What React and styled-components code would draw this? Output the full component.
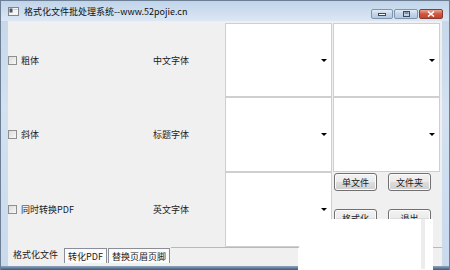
import React from 'react'
import styled, { createGlobalStyle } from 'styled-components'

const GlobalStyle = createGlobalStyle`
  html, body {
    margin: 0;
    padding: 0;
    background: #ffffff;
  }
  body {
    font-family: "Noto Sans CJK SC", "Noto Sans", sans-serif;
    font-size: 9px;
    color: #1a1a1a;
  }
`

const Window = styled.div`
  position: relative;
  box-sizing: border-box;
  width: 450px;
  height: 270px;
  display: flex;
  flex-direction: column;
  border: 1px solid #6d7f94;
  border-bottom: none;
  background: linear-gradient(#c4d6ea, #d3e1f1 40%, #c9daed);
  overflow: hidden;
`

const TitleBar = styled.div`
  height: 20px;
  display: flex;
  align-items: center;
  padding-left: 7px;
  background: linear-gradient(#c0d4ea, #dbe7f4);
`

const Title = styled.span`
  margin-left: 5px;
  font-size: 9px;
  color: #101010;
  white-space: nowrap;
`

const Caption = styled.div`
  margin-left: auto;
  margin-right: 6px;
  margin-top: 6px;
  display: flex;
  gap: 1px;
`

const CapButton = styled.div`
  box-sizing: border-box;
  width: ${({ w }) => w}px;
  height: 10px;
  display: flex;
  align-items: center;
  justify-content: center;
  border: 1px solid ${({ close }) => (close ? '#8a3b30' : '#7e95af')};
  border-radius: 2px;
  background: ${({ close }) =>
    close
      ? 'linear-gradient(#e9a795, #d0553d 50%, #c2442d)'
      : 'linear-gradient(#e3ecf6, #c3d4e8 50%, #b4c8df)'};
`

const Client = styled.div`
  flex: 1;
  margin: 0 7px 0 7px;
  background: #f0f0f0;
  display: flex;
  flex-direction: column;
  padding-top: 2px;
`

const Grid = styled.div`
  display: grid;
  grid-template-columns: 145px 72px 108px 108px;
  grid-template-rows: 74px 75px 75px;
`

const CheckCell = styled.label`
  display: flex;
  align-items: center;
  gap: 4px;
  white-space: nowrap;
`

const Box = styled.span`
  box-sizing: border-box;
  width: 9px;
  height: 9px;
  border: 1px solid #8e8f8f;
  background: linear-gradient(135deg, #dcdcdc, #f7f7f7);
`

const Label = styled.div`
  display: flex;
  align-items: center;
  white-space: nowrap;
`

const Combo = styled.div`
  box-sizing: border-box;
  margin-right: 1px;
  background: #ffffff;
  border: 1px solid #cfcfcf;
  display: flex;
  align-items: center;
  justify-content: flex-end;
  padding-right: 4px;
`

const Arrow = styled.span`
  width: 0;
  height: 0;
  border-left: 3px solid transparent;
  border-right: 3px solid transparent;
  border-top: 3px solid #000;
`

const Buttons = styled.div`
  display: grid;
  grid-template-columns: 43px 43px;
  grid-auto-rows: 18px;
  column-gap: 11px;
  row-gap: 18px;
  padding: 1px 0 0 1px;
  align-content: start;
`

const Button = styled.div`
  box-sizing: border-box;
  display: flex;
  align-items: center;
  justify-content: center;
  border: 1px solid #707070;
  border-radius: 3px;
  background: linear-gradient(#f2f2f2, #ebebeb 50%, #dddddd 51%, #cfcfcf);
  box-shadow: inset 0 0 0 1px #fcfcfc;
  white-space: nowrap;
`

const TabBar = styled.div`
  display: flex;
  align-items: flex-end;
  height: 19px;
`

const Tab = styled.div`
  box-sizing: border-box;
  height: ${({ active }) => (active ? 18 : 15)}px;
  padding: 0 ${({ active }) => (active ? 4 : 3)}px;
  display: flex;
  align-items: center;
  white-space: nowrap;
  background: ${({ active }) => (active ? '#f0f0f0' : '#fbfbfb')};
  border: 1px solid ${({ active }) => (active ? '#f0f0f0' : '#8b8e96')};
  border-bottom: none;
  margin-right: 1px;
  margin-bottom: 3px;
`

const TabRest = styled.div`
  flex: 1;
  height: 15px;
  margin-bottom: 3px;
  border-top: 1px solid #b9b9b9;
`

const BottomFrame = styled.div`
  height: 4px;
  background: linear-gradient(#8ea6c1, #3f5874);
`

const Watermark = styled.svg`
  position: absolute;
  left: 0;
  top: 0;
  pointer-events: none;
`

const AppIcon = () => (
  <svg width="11" height="9" viewBox="0 0 11 9">
    <rect x="0.5" y="0.5" width="10" height="8" fill="#f4f4f4" stroke="#7d8590" />
    <rect x="1.5" y="1.5" width="3" height="4" fill="#4b5563" />
    <rect x="5.5" y="2" width="4" height="1" fill="#c9ced6" />
  </svg>
)

const rows = [
  { check: '粗体', label: '中文字体' },
  { check: '斜体', label: '标题字体' },
  { check: '同时转换PDF', label: '英文字体' },
]

export default function App() {
  return (
    <>
      <GlobalStyle />
      <Window>
        <TitleBar>
          <AppIcon />
          <Title>格式化文件批处理系统--www.52pojie.cn</Title>
          <Caption>
            <CapButton w={22}>
              <svg width="8" height="3"><rect x="0.5" y="0.5" width="7" height="2" fill="#fff" stroke="#3b4a5c" /></svg>
            </CapButton>
            <CapButton w={24}>
              <svg width="7" height="6"><rect x="0.5" y="0.5" width="6" height="5" fill="none" stroke="#3b4a5c" /><rect x="1.5" y="1.5" width="4" height="1" fill="#3b4a5c" /></svg>
            </CapButton>
            <CapButton w={24} close>
              <svg width="8" height="6"><path d="M1 0.5 L7 5.5 M7 0.5 L1 5.5" stroke="#fff" strokeWidth="1.6" /></svg>
            </CapButton>
          </Caption>
        </TitleBar>
        <Client>
          <Grid>
            {rows.map((r, i) => (
              <React.Fragment key={r.label}>
                <CheckCell>
                  <Box />
                  {r.check}
                </CheckCell>
                <Label>{r.label}</Label>
                <Combo>
                  <Arrow />
                </Combo>
                {i < 2 ? (
                  <Combo>
                    <Arrow />
                  </Combo>
                ) : (
                  <Buttons>
                    <Button>单文件</Button>
                    <Button>文件夹</Button>
                    <Button>格式化</Button>
                    <Button>退出</Button>
                  </Buttons>
                )}
              </React.Fragment>
            ))}
          </Grid>
          <TabBar>
            <Tab active>格式化文件</Tab>
            <Tab>转化PDF</Tab>
            <Tab>替换页眉页脚</Tab>
            <TabRest />
          </TabBar>
        </Client>
        <BottomFrame />
        <Watermark width="450" height="270" viewBox="0 0 450 270">
          <path d="M297 270 L297 248 C304 234 314 222 331 218 L432 218 L432 270 Z" fill="#ffffff" />
          <rect x="420" y="218" width="4" height="50" fill="#ececec" />
        </Watermark>
      </Window>
    </>
  )
}
